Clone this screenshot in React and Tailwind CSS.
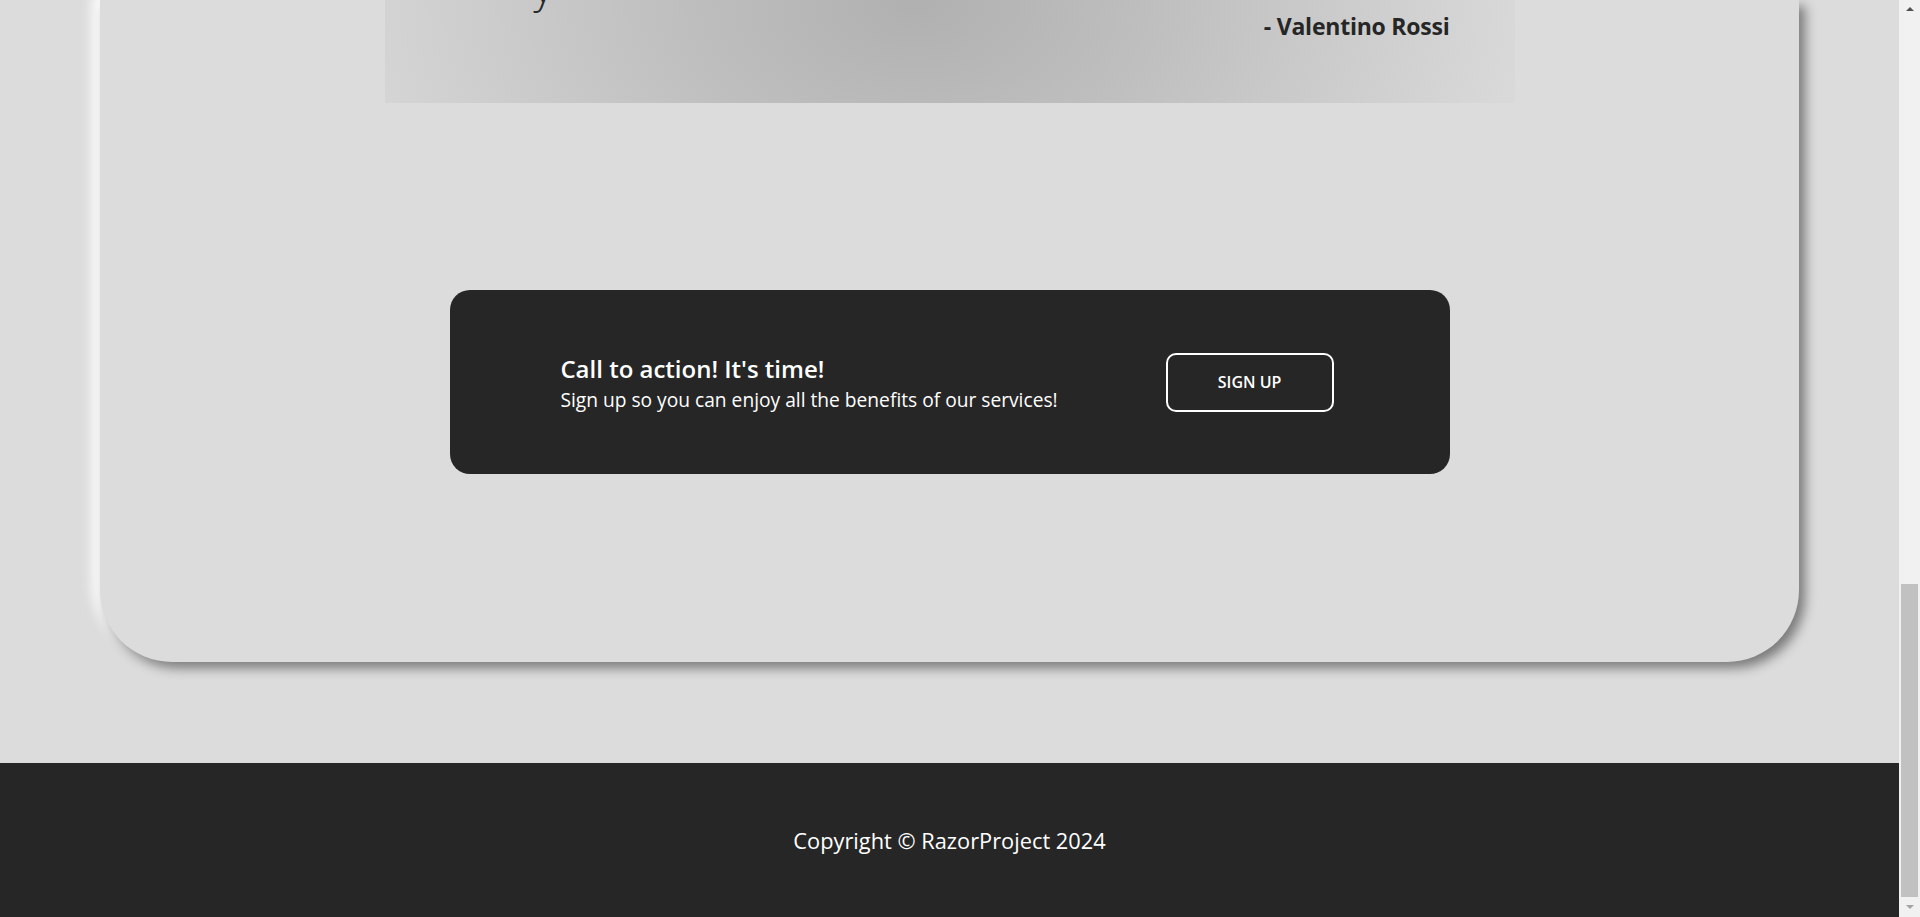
import React from "react";

const font = { fontFamily: '"Open Sans", "Noto Sans", sans-serif' };

function Scrollbar() {
  return (
    <div className="w-[21px] h-full bg-[#f1f1f1] flex flex-col items-center shrink-0">
      <div className="h-[17px] w-full flex items-center justify-center">
        <div className="w-0 h-0 border-l-[4px] border-r-[4px] border-b-[4px] border-l-transparent border-r-transparent border-b-[#505050]" />
      </div>
      <div className="flex-1" />
      <div className="w-[17px] h-[313px] bg-[#c1c1c1]" />
      <div className="h-[20px] w-full flex items-center justify-center">
        <div className="w-0 h-0 border-l-[4px] border-r-[4px] border-t-[4px] border-l-transparent border-r-transparent border-t-[#a3a3a3]" />
      </div>
    </div>
  );
}

export default function App() {
  return (
    <div className="flex h-[917px] overflow-hidden bg-[#dcdcdc]" style={font}>
      <div className="flex-1 flex flex-col min-w-0">
        {/* main card, scrolled down to its bottom */}
        <section className="mx-[100px] h-[662px] shrink-0 flex flex-col bg-[#dcdcdc] rounded-b-[72px] shadow-[6px_6px_12px_rgba(0,0,0,0.45),-8px_-6px_12px_rgba(255,255,255,0.95)]">
          <div className="mx-auto w-[1130px] h-[103px] overflow-hidden bg-[radial-gradient(ellipse_58%_420%_at_47%_0%,#b0b0b0_0%,#bebebe_35%,#dcdcdc_100%)]">
            <div className="mx-auto w-[1000px] h-full">
              <div className="pl-[84px] -mt-[34px] text-[42px] leading-none font-light text-[#262626]">
                y
              </div>
              <p className="text-right text-[23px] tracking-[-0.01em] font-bold leading-[32px] text-[#262626] mt-[2px]">
                - Valentino Rossi
              </p>
            </div>
          </div>

          <div className="mt-[187px] mx-auto w-[1000px] h-[184px] rounded-[20px] bg-[#262626] flex items-center justify-evenly text-white">
            <div className="flex flex-col pt-[2px] pl-[3px]">
              <h2 className="text-[24px] font-semibold leading-[30px]">Call to action! It's time!</h2>
              <p className="text-[19.2px] leading-[26px] mt-[3px]">Sign up so you can enjoy all the benefits of our services!</p>
            </div>
            <button className="w-[168px] h-[59px] mr-[8px] border-2 border-white rounded-[10px] text-[16px] font-semibold text-white">
              SIGN UP
            </button>
          </div>
        </section>

        <footer className="mt-[101px] h-[154px] bg-[#262626] flex items-center justify-center">
          <p className="text-white text-[21.8px] pt-[3px]">Copyright © RazorProject 2024</p>
        </footer>
      </div>
      <Scrollbar />
    </div>
  );
}
